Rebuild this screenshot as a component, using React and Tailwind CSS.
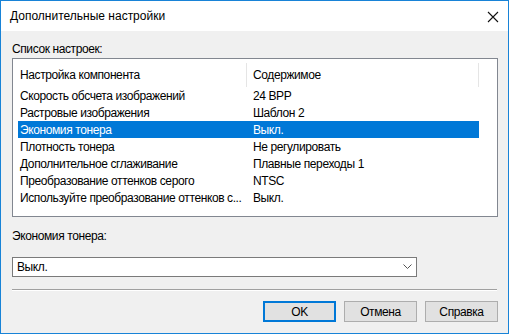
import React from "react";

const rows = [
  ["Скорость обсчета изображений", "24 BPP"],
  ["Растровые изображения", "Шаблон 2"],
  ["Экономия тонера", "Выкл."],
  ["Плотность тонера", "Не регулировать"],
  ["Дополнительное сглаживание", "Плавные переходы 1"],
  ["Преобразование оттенков серого", "NTSC"],
  ["Используйте преобразование оттенков с...", "Выкл."],
];

export default function App() {
  return (
    <div
      className="w-[509px] h-[334px] border border-[#1883d7] flex flex-col bg-[#f0f0f0] text-[12px] tracking-[-0.4px] text-black"
      style={{ fontFamily: '"Liberation Sans", Arial, sans-serif' }}
    >
      <div className="h-[30px] bg-white flex items-center justify-between pl-[9px] pr-[9px]">
        <span className="leading-[16px] tracking-[0px]">Дополнительные настройки</span>
        <svg width="12" height="12" viewBox="0 0 12 12" className="mt-[1px]">
          <path d="M1 1 L11 11 M11 1 L1 11" stroke="#111" strokeWidth="1.1" fill="none" />
        </svg>
      </div>
      <div className="flex-1 flex flex-col pl-[11px] pr-[10px] pt-[10px]">
        <div className="h-[16px] leading-[16px]">Список настроек:</div>
        <div className="mt-[1px] h-[159px] border border-[#828790] bg-white flex flex-col">
          <div className="pt-[4px] pl-[5px] flex">
            <div className="w-[229px] h-[24px] border-r border-[#e5e5e5] pl-[2px] flex items-center">
              Настройка компонента
            </div>
            <div className="w-[232px] h-[24px] border-r border-[#e5e5e5] pl-[6px] flex items-center">
              Содержимое
            </div>
          </div>
          {rows.map(([a, b], i) => (
            <div
              key={i}
              className={
                i === 2
                  ? "ml-[5px] w-[461px] h-[17px] flex items-center bg-[#0078d7] text-white"
                  : "ml-[5px] w-[461px] h-[17px] flex items-center"
              }
            >
              <div className="w-[229px] pl-[2px] whitespace-nowrap">{a}</div>
              <div className="w-[232px] pl-[6px] whitespace-nowrap">{b}</div>
            </div>
          ))}
        </div>
        <div className="mt-[11px] h-[16px] leading-[16px]">Экономия тонера:</div>
        <div className="mt-[13px] w-[405px] h-[20px] border border-[#7a7a7a] bg-white flex items-center justify-between pl-[4px] pr-[4px]">
          <span>Выкл.</span>
          <svg width="9" height="6" viewBox="0 0 9 6">
            <path d="M0.5 0.5 L4.5 4.5 L8.5 0.5" stroke="#555" strokeWidth="1" fill="none" />
          </svg>
        </div>
        <div className="mt-[12px] mr-[1px] border-t border-b border-t-[#a0a0a0] border-b-white" />
        <div className="mt-[10px] flex justify-end gap-[8px]">
          <button className="w-[73px] h-[21px] border-2 border-[#0078d7] bg-[#e1e1e1] flex items-center justify-center">
            OK
          </button>
          <button className="w-[73px] h-[21px] border border-[#adadad] bg-[#e1e1e1] flex items-center justify-center">
            Отмена
          </button>
          <button className="w-[73px] h-[21px] border border-[#adadad] bg-[#e1e1e1] flex items-center justify-center">
            Справка
          </button>
        </div>
      </div>
    </div>
  );
}
